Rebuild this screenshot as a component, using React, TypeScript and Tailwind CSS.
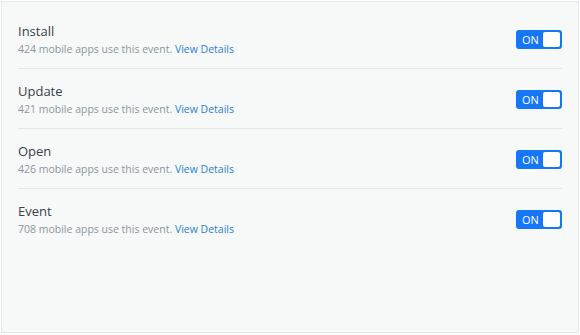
import { useState } from 'react';

const EVENTS = [
  { name: 'Install', count: 424 },
  { name: 'Update', count: 421 },
  { name: 'Open', count: 426 },
  { name: 'Event', count: 708 },
];

function Toggle({ on, onChange }: { on: boolean; onChange: () => void }) {
  return (
    <button
      onClick={onChange}
      className={`flex h-[19px] w-[46px] items-center justify-between rounded-[3px] p-[2px] ${
        on ? 'bg-[#1677f6]' : 'bg-[#c7cdd2]'
      }`}
    >
      {on ? (
        <>
          <span className="pl-[4px] text-[11px] leading-none text-white">ON</span>
          <span className="h-[15px] w-[17px] rounded-[2px] bg-white" />
        </>
      ) : (
        <>
          <span className="h-[15px] w-[17px] rounded-[2px] bg-white" />
          <span className="pr-[4px] text-[11px] leading-none text-white">OFF</span>
        </>
      )}
    </button>
  );
}

export default function App() {
  const [state, setState] = useState(EVENTS.map(() => true));

  return (
    <div className="h-[335px] w-[580px] bg-white p-px font-['Open_Sans',sans-serif]">
      <div className="h-[332px] w-[578px] border border-[#e3e8ea] bg-[#f7f9f9] pl-[16px] pr-[16px] pt-[7px]">
        {EVENTS.map((ev, i) => (
          <div
            key={ev.name}
            className={`flex items-center justify-between pb-[11px] pt-[13px] ${
              i < EVENTS.length - 1 ? 'border-b border-[#e3e8ea]' : ''
            }`}
          >
            <div>
              <p className="text-[13px] leading-[19px] text-[#38414b]">{ev.name}</p>
              <p className="text-[10.5px] leading-[16px] text-[#8c959d]">
                {ev.count} mobile apps use this event.{' '}
                <a href="#" className="text-[#2b7fd0]">
                  View Details
                </a>
              </p>
            </div>
            <Toggle
              on={state[i]}
              onChange={() => setState((s) => s.map((v, j) => (j === i ? !v : v)))}
            />
          </div>
        ))}
      </div>
    </div>
  );
}
